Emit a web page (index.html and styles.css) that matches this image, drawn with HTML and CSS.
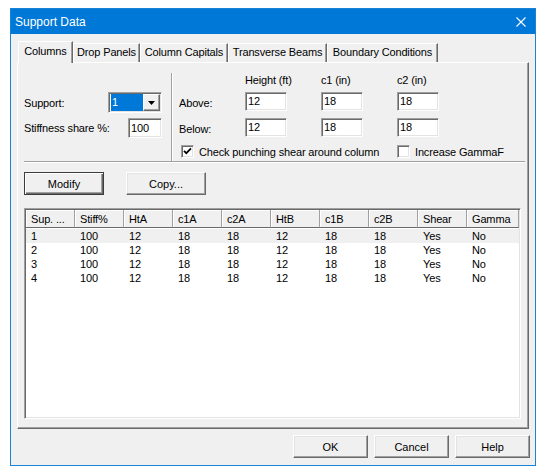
FILE: index.html
```html
<!DOCTYPE html>
<html lang="en">
<head>
  <meta charset="UTF-8">
  <title>Support Data</title>
  <link rel="stylesheet" href="styles.css">
</head>
<body>

  <div class="window">
    <!-- Barra de titulo -->
    <div class="titlebar">
      <span class="title">Support Data</span>
      <svg class="close" width="10" height="10" viewBox="0 0 10 10">
        <path d="M0.5 0.5L9.5 9.5M9.5 0.5L0.5 9.5" stroke="#fff" stroke-width="1.1" fill="none"/>
      </svg>
    </div>

    <div class="content">
      <div class="tabs">
        <div class="tab active tab-columns">Columns</div>
        <div class="tab tab-drop">Drop Panels</div>
        <div class="tab tab-capitals">Column Capitals</div>
        <div class="tab tab-beams">Transverse Beams</div>
        <div class="tab tab-boundary">Boundary Conditions</div>
      </div>

      <div class="panel">
        <div class="upper">
          <div class="support">
            <div class="field">
              <span>Support:</span>
              <div class="combo">
                <span class="combo-value">1</span>
                <span class="combo-btn">
                  <svg width="7" height="4" viewBox="0 0 7 4"><path d="M0 0H7L3.5 4Z" fill="#000"/></svg>
                </span>
              </div>
            </div>
            <div class="field">
              <span>Stiffness share %:</span>
              <div class="textbox share">100</div>
            </div>
          </div>

          <div class="dims">
            <span></span>
            <span class="dim-head">Height (ft)</span>
            <span class="dim-head">c1 (in)</span>
            <span class="dim-head">c2 (in)</span>

            <span class="row-label">Above:</span>
            <div class="textbox">12</div>
            <div class="textbox">18</div>
            <div class="textbox">18</div>

            <span class="row-label">Below:</span>
            <div class="textbox">12</div>
            <div class="textbox">18</div>
            <div class="textbox">18</div>

            <label class="check check-shear">
              <span class="box">
                <svg width="9" height="9" viewBox="0 0 9 9"><path d="M1 3.8L3.3 6.2L8 1.4" stroke="#000" stroke-width="1.7" fill="none"/></svg>
              </span>
              Check punching shear around column
            </label>
            <label class="check">
              <span class="box"></span>
              Increase GammaF
            </label>
          </div>
        </div>

        <div class="actions">
          <button class="btn default">Modify</button>
          <button class="btn">Copy...</button>
        </div>

        <div class="list">
          <table>
            <colgroup>
              <col class="c"><col class="c"><col class="c"><col class="c"><col class="c">
              <col class="c"><col class="c"><col class="c"><col class="c"><col>
            </colgroup>
            <thead>
              <tr>
                <th>Sup. ...</th><th>Stiff%</th><th>HtA</th><th>c1A</th><th>c2A</th>
                <th>HtB</th><th>c1B</th><th>c2B</th><th>Shear</th><th>Gamma</th>
              </tr>
            </thead>
            <tbody>
              <tr class="selected">
                <td>1</td><td>100</td><td>12</td><td>18</td><td>18</td><td>12</td><td>18</td><td>18</td><td>Yes</td><td>No</td>
              </tr>
              <tr>
                <td>2</td><td>100</td><td>12</td><td>18</td><td>18</td><td>12</td><td>18</td><td>18</td><td>Yes</td><td>No</td>
              </tr>
              <tr>
                <td>3</td><td>100</td><td>12</td><td>18</td><td>18</td><td>12</td><td>18</td><td>18</td><td>Yes</td><td>No</td>
              </tr>
              <tr>
                <td>4</td><td>100</td><td>12</td><td>18</td><td>18</td><td>12</td><td>18</td><td>18</td><td>Yes</td><td>No</td>
              </tr>
            </tbody>
          </table>
        </div>
      </div>

      <div class="footer">
        <button class="btn dialog">OK</button>
        <button class="btn dialog">Cancel</button>
        <button class="btn dialog">Help</button>
      </div>
    </div>
  </div>

</body>
</html>
```

FILE: styles.css
```css
* {
  margin: 0;
  padding: 0;
  box-sizing: border-box;
}

body {
  font-family: "Liberation Sans", Arial, sans-serif;
  font-size: 11px;
  letter-spacing: -0.15px;
  color: #000;
  background-color: #fff;
  padding: 8px 0 0 10px;
}

.window {
  width: 526px;
  height: 458px;
  border: 1px solid #1883d7;
  background-color: #f0f0f0;
  display: flex;
  flex-direction: column;
}

.titlebar {
  height: 25px;
  background-color: #0078d7;
  color: #fff;
  font-size: 12px;
  letter-spacing: 0;
  display: flex;
  align-items: center;
  justify-content: space-between;
  padding: 0 9px 0 4px;
}

.content {
  flex: 1;
  padding: 7px 6px;
  display: flex;
  flex-direction: column;
}

/* abas */
.tabs {
  display: flex;
  align-items: flex-end;
  height: 21px;
  padding-left: 1px;
  position: relative;
  z-index: 1;
}

.tab {
  height: 19px;
  line-height: 17px;
  text-align: center;
  white-space: nowrap;
  border: 1px solid;
  border-color: #fff #696969 transparent #fff;
  border-bottom: none;
  box-shadow: inset -1px 0 #a0a0a0;
}

.tab.active {
  height: 22px;
  line-height: 19px;
  margin-bottom: -1px;
  background-color: #f0f0f0;
}

.tab-columns { width: 55px; }
.tab-drop { width: 67px; }
.tab-capitals { width: 88px; }
.tab-beams { width: 99px; }
.tab-boundary { width: 111px; }

.panel {
  height: 367px;
  border: 1px solid;
  border-color: #fff #696969 #696969 #fff;
  box-shadow: inset -1px -1px #a0a0a0;
  padding: 10px 2px 0 6px;
}

.upper {
  display: flex;
  height: 89px;
  border-bottom: 1px solid #a0a0a0;
  box-shadow: 0 1px #fff;
  margin-right: 1px;
}

.support {
  width: 147px;
  padding: 19px 9px 0 0;
  display: flex;
  flex-direction: column;
  gap: 5px;
}

.field {
  display: flex;
  justify-content: space-between;
  align-items: center;
}

.combo {
  width: 54px;
  height: 21px;
  border: 1px solid;
  border-color: #a0a0a0 #fff #fff #a0a0a0;
  box-shadow: inset 1px 1px #696969, inset -1px -1px #e3e3e3;
  background-color: #fff;
  padding: 1px 1px 1px 2px;
  display: flex;
}

.combo-value {
  flex: 1;
  background-color: #0078d7;
  color: #fff;
  padding-left: 1px;
  line-height: 17px;
}

.combo-btn {
  width: 17px;
  background-color: #f0f0f0;
  border: 1px solid;
  border-color: #fff #696969 #696969 #fff;
  box-shadow: inset -1px -1px #a0a0a0;
  display: flex;
  justify-content: center;
  align-items: center;
}

.textbox {
  height: 19px;
  border: 1px solid;
  border-color: #a0a0a0 #fff #fff #a0a0a0;
  box-shadow: inset 1px 1px #696969, inset -1px -1px #e3e3e3;
  background-color: #fff;
  padding-left: 2px;
  line-height: 17px;
}

.textbox.share {
  width: 34px;
  height: 20px;
  line-height: 18px;
}

.dims {
  flex: 1;
  border-left: 1px solid #a0a0a0;
  box-shadow: inset 1px 0 #fff;
  padding-left: 7px;
  display: grid;
  grid-template-columns: 32px 42px 42px 42px;
  grid-template-rows: 12px 19px 19px auto;
  column-gap: 34px;
  row-gap: 7px;
  align-content: start;
}

.dim-head {
  margin-top: 1px;
  white-space: nowrap;
}

.row-label {
  align-self: center;
  padding-top: 2px;
  white-space: nowrap;
}

.check {
  display: flex;
  align-items: center;
  gap: 5px;
  white-space: nowrap;
  margin-top: 1px;
}

.check-shear {
  grid-column: 1 / 4;
  margin-left: 2px;
}

.box {
  flex-shrink: 0;
  width: 13px;
  height: 13px;
  border: 1px solid;
  border-color: #a0a0a0 #fff #fff #a0a0a0;
  box-shadow: inset 1px 1px #696969, inset -1px -1px #e3e3e3;
  background-color: #fff;
  display: flex;
  justify-content: center;
  align-items: center;
}

/* botoes */
.btn {
  font: inherit;
  color: #000;
  width: 80px;
  height: 23px;
  background-color: #f0f0f0;
  border: 1px solid;
  border-color: #fff #696969 #696969 #fff;
  box-shadow: inset -1px -1px #a0a0a0, inset 1px 1px #e3e3e3;
}

.btn.default {
  border-color: #3c3c3c;
  box-shadow: inset 1px 1px #fff, inset -1px -1px #696969, inset -2px -2px #a0a0a0;
}

.btn.dialog {
  width: 75px;
}

.actions {
  display: flex;
  gap: 22px;
  margin-top: 10px;
}

/* lista */
.list {
  width: 497px;
  height: 211px;
  margin-top: 13px;
  border: 1px solid;
  border-color: #a0a0a0 #fff #fff #a0a0a0;
  box-shadow: inset 1px 1px #696969, inset -1px -1px #e3e3e3;
  background-color: #fff;
  padding: 1px;
}

table {
  width: 100%;
  table-layout: fixed;
  border-collapse: separate;
  border-spacing: 0;
}

col.c {
  width: 49px;
}

th {
  height: 18px;
  font-weight: normal;
  text-align: left;
  padding: 0 0 0 5px;
  background-color: #f0f0f0;
  border-right: 1px solid #a0a0a0;
  border-bottom: 1px solid #696969;
  box-shadow: inset 1px 1px #fff;
  white-space: nowrap;
}

td {
  height: 14px;
  line-height: 14px;
  padding: 0 0 0 5px;
  white-space: nowrap;
}

tbody tr:first-child td {
  border-top: 1px solid #fff;
  height: 15px;
}

tr.selected td {
  background-color: #f0f0f0;
}

.footer {
  display: flex;
  justify-content: flex-end;
  gap: 6px;
  margin-top: 6px;
  margin-right: -1px;
}
```
